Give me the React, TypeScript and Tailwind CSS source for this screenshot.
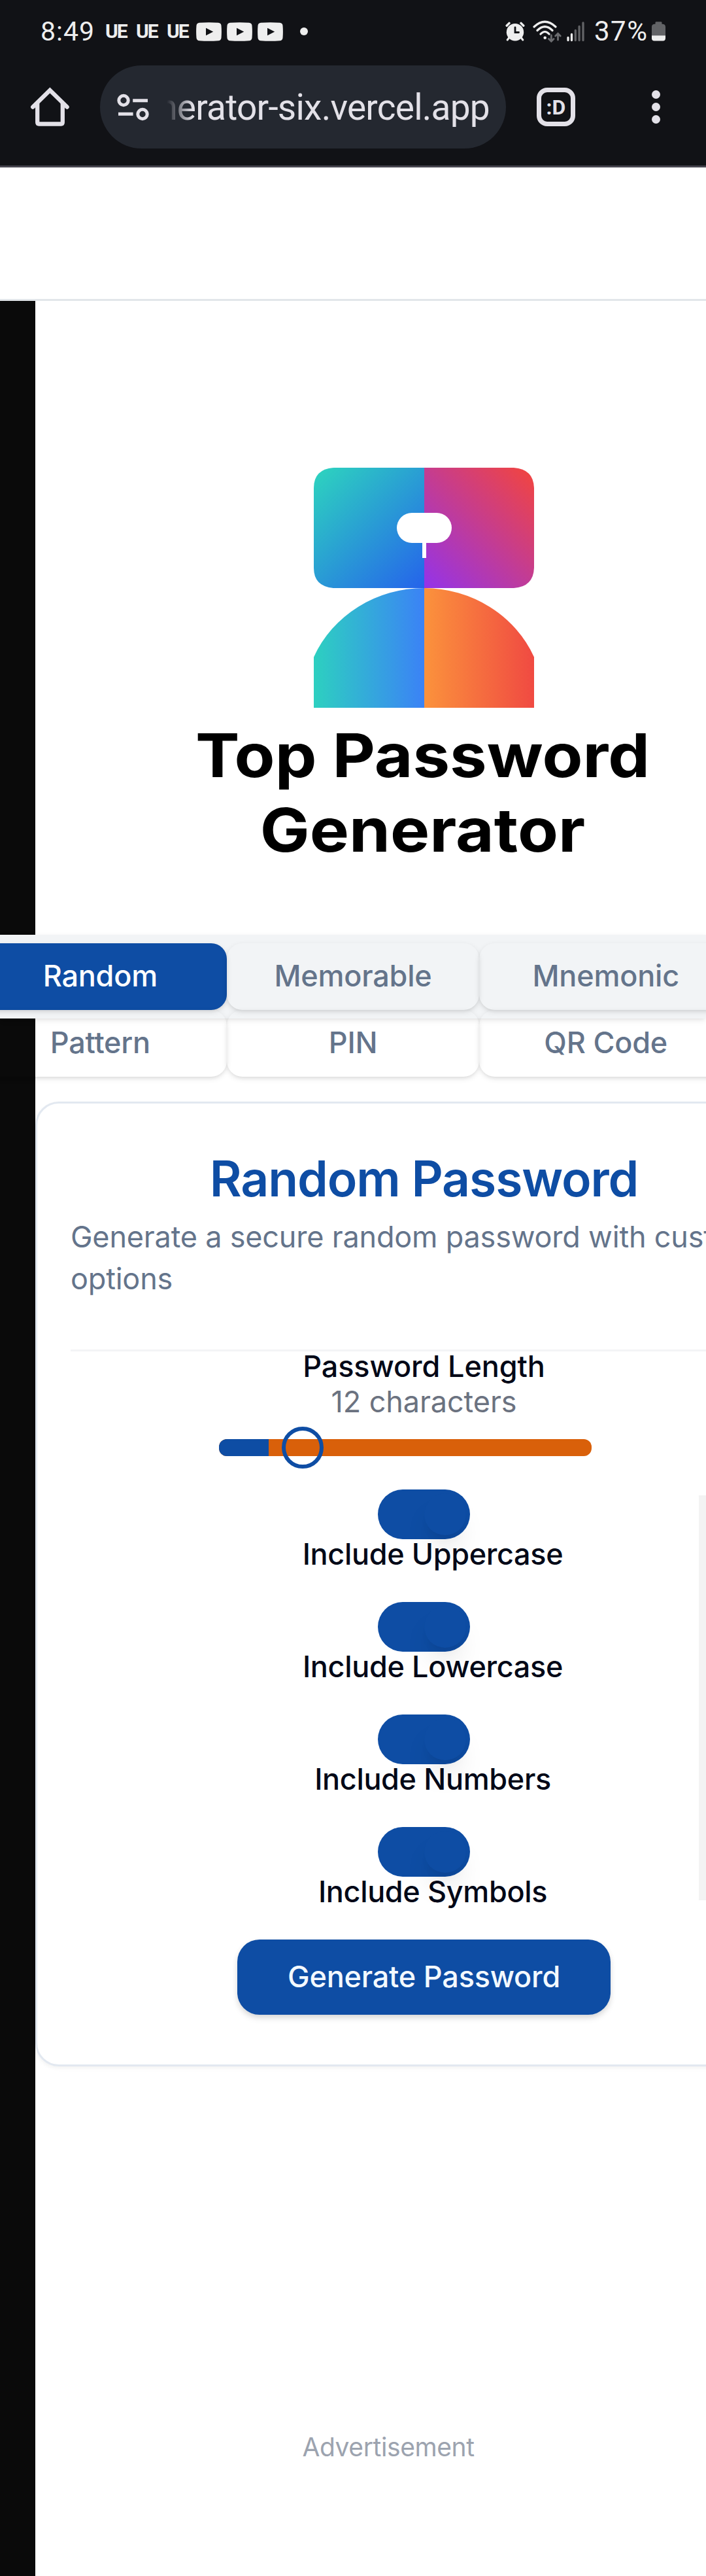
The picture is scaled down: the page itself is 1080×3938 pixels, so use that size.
import type { ReactNode } from "react";

function PlayBadge() {
  return (
    <svg width="39" height="29" viewBox="0 0 39 29" className="shrink-0">
      <path
        d="M5 .7Q19.500 -.4 34 .7Q38 1 38.500 5Q39.300 14.500 38.500 24Q38 28 34 28.300Q19.500 29.400 5 28.300Q1 28 .5 24Q-.3 14.500 .5 5Q1 1 5 .7Z"
        fill="#eeeeee"
      />
      <path d="M15 8.700L26.200 14.500L15 20.300Z" fill="#111216" />
    </svg>
  );
}

function AlarmIcon() {
  return (
    <svg width="30" height="30" viewBox="0 0 30 30" fill="none" strokeLinecap="round">
      <circle cx="15" cy="16.200" r="13.200" fill="#eeeeee" />
      <path d="M2.200 6.300L6 2.400M27.800 6.300L24 2.400" stroke="#eeeeee" strokeWidth="3.400" />
      <path d="M5.500 25L3.200 28M24.500 25L26.800 28" stroke="#eeeeee" strokeWidth="3" />
      <path d="M15 8.800V16.500H20.500" stroke="#111216" strokeWidth="2.800" />
    </svg>
  );
}

function WifiIcon() {
  return (
    <svg width="44" height="34" viewBox="0 0 44 34" fill="none" strokeLinecap="round">
      <path d="M2 10Q18.500 -5.500 35 10M7 15.500Q18.500 4 30 15.500M12 21Q18.500 14 25 21" stroke="#eeeeee" strokeWidth="3.200" />
      <circle cx="18.700" cy="26.700" r="2.300" fill="#eeeeee" />
      <path d="M28.300 23V32M24.500 28.500L28.300 32.200L32 28.500M38.500 30V20.500M34.700 24L38.500 20.200L42.200 24" stroke="#6b6c6f" strokeWidth="2.800" />
    </svg>
  );
}

function SignalIcon() {
  return (
    <svg width="28" height="31" viewBox="0 0 28 31" strokeWidth="3.300" strokeLinecap="round">
      <path d="M2 24.500V28.500M7.500 19.500V28.500" stroke="#eeeeee" />
      <path d="M13.300 13.500V28.500M19.100 7.500V28.500M25 2V28.500" stroke="#626366" />
    </svg>
  );
}

function BatteryIcon() {
  return (
    <svg width="21" height="30" viewBox="0 0 21 30">
      <path d="M5.500 1.500Q5.500 .2 7 .2H14Q15.500 .2 15.500 1.500V3.700H17Q21 4.200 21 8V21.200H0V8Q0 4.200 4 3.700H5.500Z" fill="#626366" />
      <path d="M0 21.200H21V25.500Q21 29.500 17 29.500H4Q0 29.500 0 25.500Z" fill="#eeeeee" />
    </svg>
  );
}

function StatusBar() {
  return (
    <div className="flex h-[100px] items-start justify-between font-[Roboto] text-[#eeeeee]">
      <div className="flex h-[96px] items-center pl-[62px]">
        <span className="w-[99px] text-[41px] leading-none tracking-[1px]">8:49</span>
        <div className="flex w-[139px] text-[30px] font-bold leading-none tracking-[-2px]">
          <span className="w-[47px]">UE</span>
          <span className="w-[47px]">UE</span>
          <span>UE</span>
        </div>
        <div className="flex gap-2">
          <PlayBadge />
          <PlayBadge />
          <PlayBadge />
        </div>
        <span className="ml-[26px] size-3 rounded-full bg-[#eeeeee]" />
      </div>
      <div className="flex h-[96px] items-center pr-[62px]">
        <AlarmIcon />
        <span className="ml-3"><WifiIcon /></span>
        <span className="ml-2"><SignalIcon /></span>
        <span className="ml-[14px] w-[88px] text-[42px] leading-none tracking-[1.500px]">37%</span>
        <BatteryIcon />
      </div>
    </div>
  );
}

function BrowserBar() {
  return (
    <div className="flex h-[153px] items-start text-[#e3e1e8]">
      <svg width="60" height="127" viewBox="46 100 60 127" fill="none" stroke="#e3e1e8" className="ml-[46px]">
        <path d="M50.300 163.500L76.400 138L102.500 163.500" strokeWidth="6.500" strokeLinecap="round" />
        <path d="M57.200 158V187Q57.200 189.500 59.500 189.500H93.500Q95.800 189.500 95.800 187V158" strokeWidth="6.300" />
      </svg>
      <div className="ml-[47px] flex h-[127px] w-[621px] items-center rounded-full bg-[#242830]">
        <svg width="50" height="42" viewBox="179 142.500 50 42" fill="none" stroke="#e3e1e8" strokeWidth="5" className="ml-[26px]">
          <circle cx="189" cy="153" r="7.200" />
          <path d="M203.200 153.300H226M181 173.700H203.600" />
          <circle cx="218" cy="174" r="7.200" />
        </svg>
        <div className="ml-[26px] flex w-[495px] justify-end overflow-hidden [mask-image:linear-gradient(to_right,transparent,black_40px)]">
          <span className="whitespace-nowrap pr-[1px] font-[Roboto] text-[55px] leading-[76px] tracking-[-0.750px]">generator-six.vercel.app</span>
        </div>
      </div>
      <div className="mt-[34px] ml-[47px] flex h-[59px] w-[59px] items-center justify-center rounded-[16px] border-[7px] border-[#e3e1e8] font-[Roboto] text-[32px] font-bold leading-none">
        :D
      </div>
      <div className="mt-[38px] ml-[117px] flex flex-col gap-[6.200px]">
        <span className="size-[13px] rounded-full bg-[#e3e1e8]" />
        <span className="size-[13px] rounded-full bg-[#e3e1e8]" />
        <span className="size-[13px] rounded-full bg-[#e3e1e8]" />
      </div>
    </div>
  );
}

function Logo() {
  return (
    <svg width="338" height="367" viewBox="0 0 338 367" className="mx-auto block">
      <defs>
        <linearGradient id="topLeft" gradientUnits="userSpaceOnUse" x1="0" y1="16" x2="169" y2="184">
          <stop offset="0" stopColor="#2dd0c0" />
          <stop offset="1" stopColor="#2563eb" />
        </linearGradient>
        <linearGradient id="topRight" gradientUnits="userSpaceOnUse" x1="169" y1="184" x2="338" y2="16">
          <stop offset="0" stopColor="#9333ea" />
          <stop offset="1" stopColor="#ef4444" />
        </linearGradient>
        <linearGradient id="bottomLeft" x1="0" x2="1" y1="0" y2="0">
          <stop offset="0" stopColor="#2dd0c0" />
          <stop offset="1" stopColor="#3b82f6" />
        </linearGradient>
        <linearGradient id="bottomRight" x1="0" x2="1" y1="0" y2="0">
          <stop offset="0" stopColor="#fb923c" />
          <stop offset="1" stopColor="#f04a42" />
        </linearGradient>
      </defs>
      <path d="M31 0H169V184H31Q0 182 0 153V31Q0 2 31 0Z" fill="url(#topLeft)" />
      <path d="M169 0H306Q336 2 337 31V153Q336 182 306 184H169Z" fill="url(#topRight)" />
      <path d="M169 184A184 175 0 0 0 0 289.500V367H169Z" fill="url(#bottomLeft)" />
      <path d="M169 184A184 175 0 0 1 337 289.500V367H169Z" fill="url(#bottomRight)" />
      <rect x="127" y="69" width="84" height="46" rx="23" fill="#fff" />
      <rect x="166" y="110" width="6" height="28" fill="#fff" />
    </svg>
  );
}

const tabShadow = "shadow-[0_3px_9px_rgba(0,0,0,0.1),0_3px_6px_-3px_rgba(0,0,0,0.1)]";

function Tab({ children, active }: { children: ReactNode; active?: boolean }) {
  return (
    <div
      className={`flex h-[102px] items-center justify-center rounded-[24px] pb-[1px] ${tabShadow} ${
        active ? "bg-[#0e4da4] text-white" : "text-[#64748b]"
      }`}
    >
      {children}
    </div>
  );
}

function TabBar() {
  return (
    <div className="mt-[103px] -ml-[54px] h-[128px] w-[1080px] bg-[#f2f4f6] pt-[13px] shadow-[0_3px_9px_rgba(0,0,0,0.08),0_3px_6px_-3px_rgba(0,0,0,0.08)]">
      <div className="-ml-[40px] grid w-[1160px] grid-cols-3 text-[45px] font-medium tracking-[-0.200px]">
        <Tab active>Random</Tab>
        <Tab>Memorable</Tab>
        <Tab>Mnemonic</Tab>
        <Tab>Pattern</Tab>
        <Tab>PIN</Tab>
        <Tab>QR Code</Tab>
      </div>
    </div>
  );
}

function Toggle({ label }: { label: string }) {
  return (
    <div className="flex h-[119px] flex-col items-center">
      <div className="flex h-[76px] w-[141px] shrink-0 items-center justify-end rounded-full bg-[#0e4da4] pr-[6px]">
        <span className="size-[64px] rounded-full bg-[#0e4da4] shadow-[0_28px_42px_-8px_rgba(0,0,0,0.1),0_11px_17px_-11px_rgba(0,0,0,0.1)]" />
      </div>
      <span className="relative mt-[2px] pl-[27px] leading-[42px] font-medium tracking-[-0.350px] text-[#020817]">{label}</span>
    </div>
  );
}

function GeneratorCard() {
  return (
    <div className="mt-[127px] h-[1475px] rounded-[36px] border-[3px] border-[#e2e8f0] px-[51px] pt-[77px] text-[45px] shadow-[0_3px_6px_rgba(0,0,0,0.05)]">
      <h2 className="text-center text-[75px] leading-[75px] font-semibold tracking-[-1.100px] text-[#0e4da4]">Random Password</h2>
      <p className="mt-[20px] leading-[64px] tracking-[-0.200px] text-[#64748b]">
        Generate a secure random password with custom
        <br />
        options
      </p>
      <div className="mt-[76px] h-[3px] bg-[#f3f4f6]" />
      <div className="relative flex flex-col items-center">
        <div className="mt-[2px] leading-[42px] font-medium tracking-[-0.100px] text-[#020817]">Password Length</div>
        <div className="mt-3 leading-[42px] tracking-[-0.100px] text-[#6b7280]">12 characters</div>
        <div className="relative mt-9 mr-[57px] flex h-[26px] w-[570px] rounded-[12px] bg-[#d9600a]">
          <div className="w-[76px] rounded-l-[12px] bg-[#0e4da4]" />
          <div className="absolute -top-[19px] left-[96px] size-[64px] rounded-full border-[6px] border-[#0e4da4]" />
        </div>
        <div className="mt-[51px] flex flex-col gap-[53px]">
          <Toggle label="Include Uppercase" />
          <Toggle label="Include Lowercase" />
          <Toggle label="Include Numbers" />
          <Toggle label="Include Symbols" />
        </div>
        <div className="absolute top-[220px] left-[961px] h-[619px] w-[100px] bg-[#f3f3f3]" />
        <div className="mt-[53px] flex h-[115px] w-[571px] items-center justify-center rounded-[34px] bg-[#0e4da4] font-medium tracking-[-0.200px] text-[#f3f9ff] shadow-[0_6px_12px_-2px_rgba(0,0,0,0.12),0_3px_9px_rgba(0,0,0,0.08)]">
          Generate Password
        </div>
      </div>
    </div>
  );
}

export default function App() {
  return (
    <div className="h-[3938px] w-[1080px] overflow-hidden bg-[#0a0a0a] font-[Inter]">
      <div className="h-[256px] border-b-[3px] border-[#46454f] bg-[#111216]">
        <StatusBar />
        <BrowserBar />
      </div>
      <header className="h-[204px] border-b-[3px] border-[#e2e6ea] bg-white" />
      <main className="ml-[54px] h-[3478px] w-[1189px] bg-white pt-[255px]">
        <Logo />
        <h1 className="mt-[15.500px] -ml-[4px] scale-x-110 text-center text-[92px] leading-[114px] font-bold text-black">
          Top Password
          <br />
          Generator
        </h1>
        <TabBar />
        <GeneratorCard />
        <p className="mt-[558px] w-[1080px] text-center text-[39px] leading-[48px] tracking-[-0.400px] text-[#9ca3af]">Advertisement</p>
      </main>
    </div>
  );
}
